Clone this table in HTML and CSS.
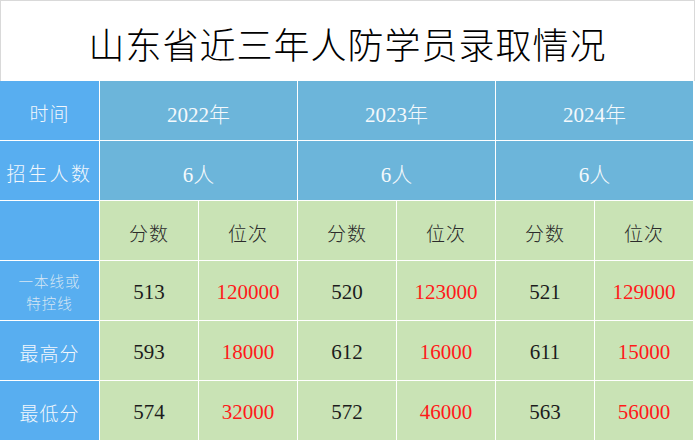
FILE: index.html
```html
<!DOCTYPE html>
<html lang="zh">
<head>
<meta charset="utf-8">
<link rel="stylesheet" href="styles.css">
</head>
<body>
<div class="sheet">
  <div class="title">山东省近三年人防学员录取情况</div>
  <div class="grid">
    <div class="cell label">时间</div>
    <div class="cell head span2">2022年</div>
    <div class="cell head span2">2023年</div>
    <div class="cell head span2">2024年</div>

    <div class="cell label spaced">招生人数</div>
    <div class="cell head span2">6人</div>
    <div class="cell head span2">6人</div>
    <div class="cell head span2">6人</div>

    <div class="cell label"></div>
    <div class="cell data sub">分数</div>
    <div class="cell data sub">位次</div>
    <div class="cell data sub">分数</div>
    <div class="cell data sub">位次</div>
    <div class="cell data sub">分数</div>
    <div class="cell data sub">位次</div>

    <div class="cell label small">一本线或<br>特控线</div>
    <div class="cell data">513</div>
    <div class="cell data red">120000</div>
    <div class="cell data">520</div>
    <div class="cell data red">123000</div>
    <div class="cell data">521</div>
    <div class="cell data red">129000</div>

    <div class="cell label">最高分</div>
    <div class="cell data">593</div>
    <div class="cell data red">18000</div>
    <div class="cell data">612</div>
    <div class="cell data red">16000</div>
    <div class="cell data">611</div>
    <div class="cell data red">15000</div>

    <div class="cell label">最低分</div>
    <div class="cell data">574</div>
    <div class="cell data red">32000</div>
    <div class="cell data">572</div>
    <div class="cell data red">46000</div>
    <div class="cell data">563</div>
    <div class="cell data red">56000</div>
  </div>
</div>
</body>
</html>
```

FILE: styles.css
```css
* { box-sizing: border-box; }
html, body { margin: 0; padding: 0; background: #ffffff; }
body {
  font-family: "Liberation Serif", "Noto Sans CJK SC", serif;
}
.sheet {
  width: 695px;
  height: 442px;
  background: #ffffff;
}
.title {
  height: 81px;
  border: 1px solid #d9d9d9;
  border-bottom: none;
  display: flex;
  align-items: center;
  justify-content: center;
  font-family: "Noto Sans CJK SC", sans-serif;
  font-weight: 300;
  font-size: 36px;
  letter-spacing: 1px;
  color: #000000;
  padding-top: 4px;
}
.grid {
  display: grid;
  grid-template-columns: 99px repeat(6, 98px);
  grid-template-rows: repeat(6, 59px);
  gap: 1px;
  width: 693px;
  background: #ffffff;
}
.cell {
  display: flex;
  align-items: center;
  justify-content: center;
  text-align: center;
  padding-top: 4px;
  font-size: 21px;
}
.span2 { grid-column: span 2; }
.label {
  background: #58aef0;
  color: #f2f7fc;
  font-family: "Noto Sans CJK SC", sans-serif;
  font-weight: 300;
  font-size: 19px;
  letter-spacing: 1px;
}
.label.spaced { letter-spacing: 2.5px; }
.label.small {
  font-size: 14.5px;
  line-height: 22px;
  color: #d6e6f4;
  letter-spacing: 1px;
  padding-top: 2px;
}
.head {
  background: #6cb5da;
  color: #f4f9fc;
  font-family: "Liberation Serif", "Noto Sans CJK SC", serif;
  font-weight: 300;
}
.data {
  background: #c9e3b5;
  color: #1c1c1c;
}
.sub {
  font-family: "Noto Sans CJK SC", sans-serif;
  font-weight: 300;
  font-size: 19px;
  letter-spacing: 1px;
  color: #2b2b2b;
}
.red { color: #ff1a1a; }
```
